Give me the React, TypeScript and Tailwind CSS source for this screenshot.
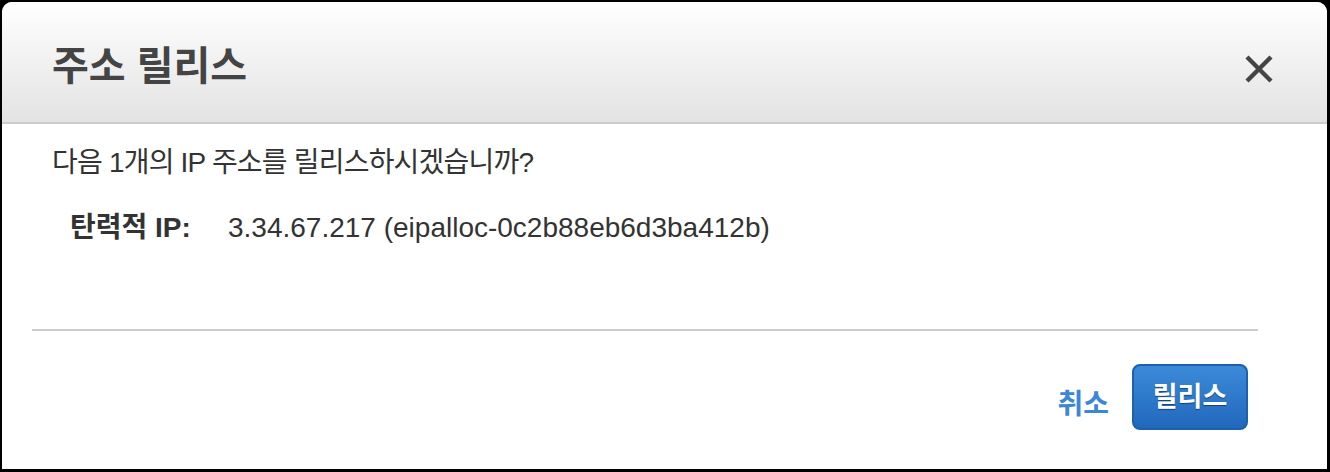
import React from "react";

export default function App() {
  const font = { fontFamily: '"Liberation Sans", "Noto Sans CJK KR", sans-serif' };
  return (
    <div className="w-[1330px] h-[472px] bg-black pt-[2px] pl-[2px] pr-[3px] pb-[3px]" style={font}>
      <div className="w-full h-full bg-white rounded-t-[10px] flex flex-col overflow-hidden">
        <div className="h-[122px] shrink-0 bg-gradient-to-b from-white to-[#e3e3e3] border-b-2 border-[#cccccc] flex items-start justify-between pl-[50px] pr-[54px] pt-[44px]">
          <h1 className="text-[40px] font-bold text-[#444444] leading-none">주소 릴리스</h1>
          <svg width="28" height="28" viewBox="0 0 28 28" className="mt-[9px]">
            <path d="M2 2 L26 26 M26 2 L2 26" stroke="#444444" strokeWidth="4.4" strokeLinecap="butt" />
          </svg>
        </div>
        <div className="flex-1 flex flex-col px-[30px]">
          <div className="pl-[20px] pt-[23px] h-[205px]">
            <p className="text-[28px] text-[#333333] leading-[32px] tracking-[-0.8px]">다음 1개의 IP 주소를 릴리스하시겠습니까?</p>
            <div className="flex mt-[33px] pl-[18px] text-[28px] text-[#333333] leading-[32px]">
              <span className="font-bold w-[158px]">탄력적 IP:</span>
              <span>3.34.67.217 (eipalloc-0c2b88eb6d3ba412b)</span>
            </div>
          </div>
          <div className="h-[2px] bg-[#cccccc] w-[1226px]" />
          <div className="flex justify-end items-center gap-[23px] pt-[33px] pr-[49px]">
            <span className="text-[28px] font-bold text-[#3b87d6] leading-[32px] pt-[16px]">취소</span>
            <button className="w-[116px] h-[66px] rounded-[8px] border-2 border-[#1d60ae] bg-gradient-to-b from-[#3b8ad8] to-[#2168bd] text-white text-[27px] font-bold leading-none [text-shadow:0_1px_1px_rgba(0,0,0,0.45)]">
              릴리스
            </button>
          </div>
        </div>
      </div>
    </div>
  );
}
